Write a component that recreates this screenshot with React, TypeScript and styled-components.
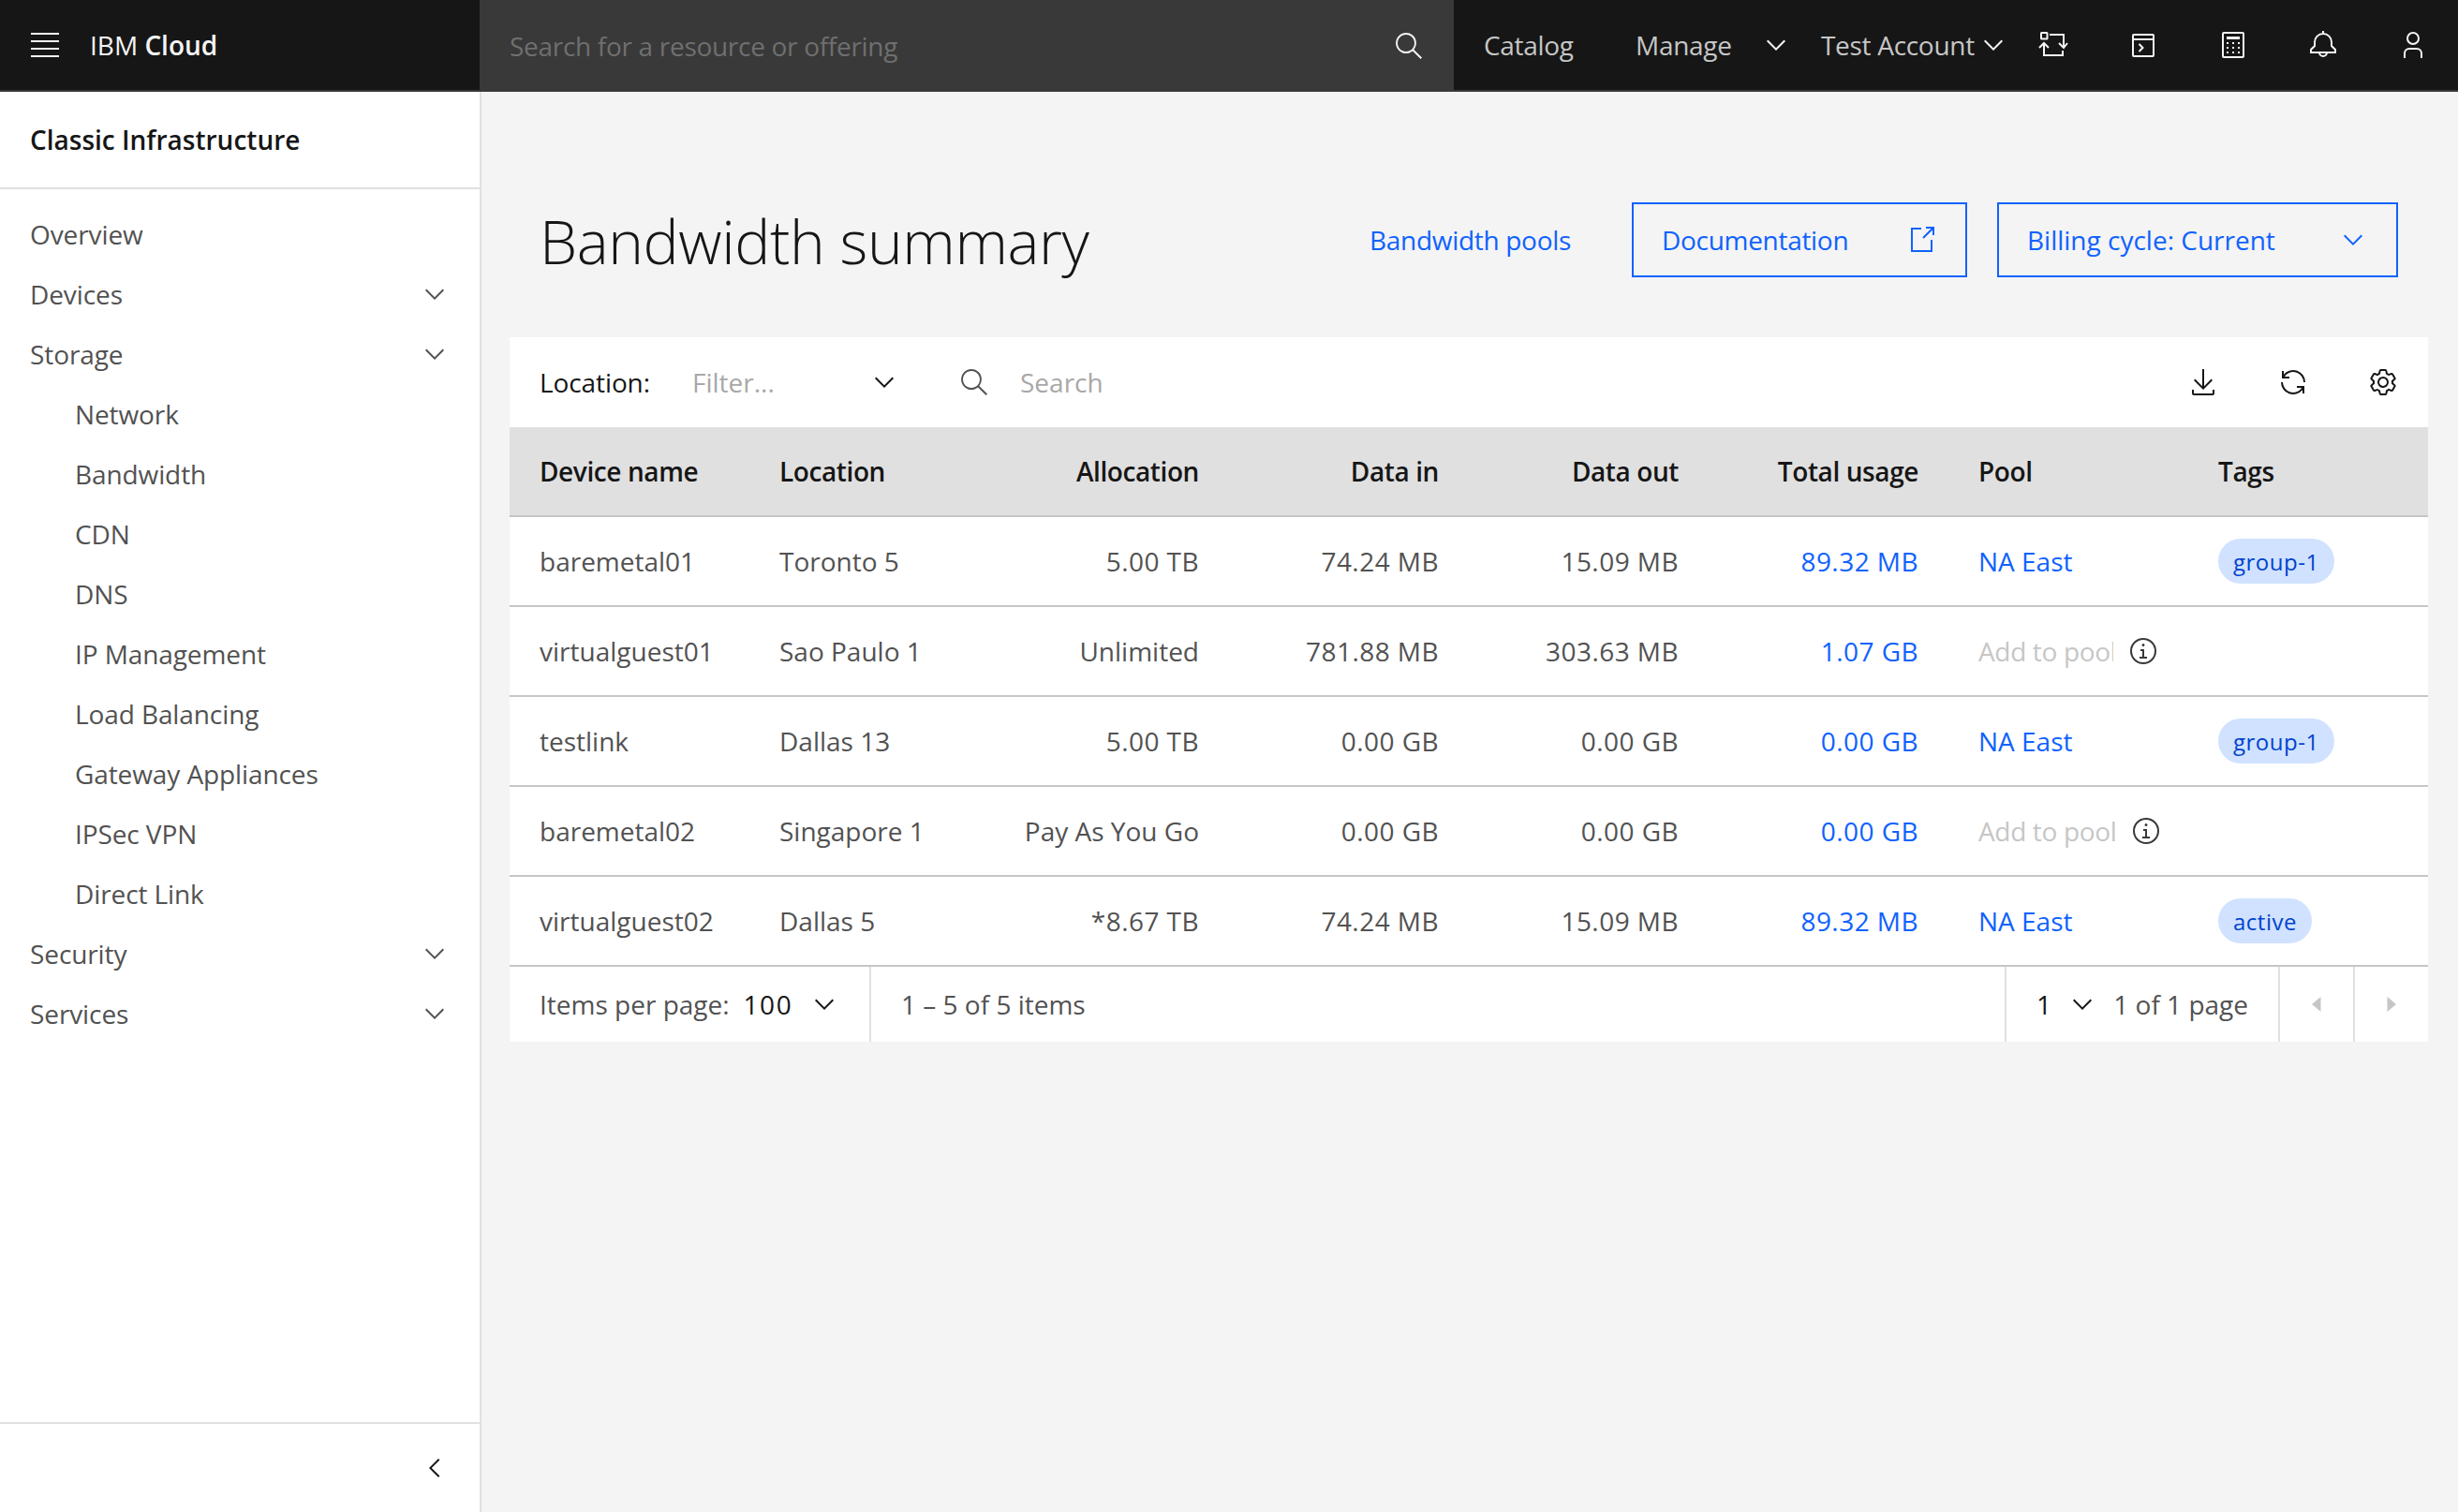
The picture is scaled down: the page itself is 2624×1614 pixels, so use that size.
import React from "react";
import styled, { createGlobalStyle } from "styled-components";

const GlobalStyle = createGlobalStyle`
  html, body {
    margin: 0;
    padding: 0;
    background: #f4f4f4;
  }
  body {
    font-family: "Open Sans", "Noto Sans", sans-serif;
    font-size: 28px;
    color: #161616;
  }
  * {
    box-sizing: border-box;
  }
`;

const NAV_ITEMS = [
  { label: "Overview" },
  { label: "Devices", expandable: true },
  { label: "Storage", expandable: true },
  { label: "Network", child: true },
  { label: "Bandwidth", child: true },
  { label: "CDN", child: true },
  { label: "DNS", child: true },
  { label: "IP Management", child: true },
  { label: "Load Balancing", child: true },
  { label: "Gateway Appliances", child: true },
  { label: "IPSec VPN", child: true },
  { label: "Direct Link", child: true },
  { label: "Security", expandable: true },
  { label: "Services", expandable: true },
];

const COLUMNS = [
  { label: "Device name" },
  { label: "Location" },
  { label: "Allocation", right: true },
  { label: "Data in", right: true },
  { label: "Data out", right: true },
  { label: "Total usage", right: true },
  { label: "Pool" },
  { label: "Tags" },
];

const ROWS = [
  { name: "baremetal01", location: "Toronto 5", allocation: "5.00 TB", dataIn: "74.24 MB", dataOut: "15.09 MB", total: "89.32 MB", pool: "NA East", tag: "group-1" },
  { name: "virtualguest01", location: "Sao Paulo 1", allocation: "Unlimited", dataIn: "781.88 MB", dataOut: "303.63 MB", total: "1.07 GB", clipPool: true },
  { name: "testlink", location: "Dallas 13", allocation: "5.00 TB", dataIn: "0.00 GB", dataOut: "0.00 GB", total: "0.00 GB", pool: "NA East", tag: "group-1" },
  { name: "baremetal02", location: "Singapore 1", allocation: "Pay As You Go", dataIn: "0.00 GB", dataOut: "0.00 GB", total: "0.00 GB" },
  { name: "virtualguest02", location: "Dallas 5", allocation: "*8.67 TB", dataIn: "74.24 MB", dataOut: "15.09 MB", total: "89.32 MB", pool: "NA East", tag: "active" },
];

const hasDigits = (value: string) => /\d/.test(value);

const Chevron = () => (
  <svg width="32" height="32" viewBox="0 0 16 16" fill="currentColor">
    <path d="M8 11L3 6l.7-.7L8 9.6l4.3-4.3.7.7z" />
  </svg>
);

const ChevronLeft = () => (
  <svg width="32" height="32" viewBox="0 0 16 16" fill="currentColor">
    <path d="M5 8l5-5 .7.7L6.4 8l4.3 4.3-.7.7z" />
  </svg>
);

const SearchIcon = () => (
  <svg width="32" height="32" viewBox="0 0 16 16" fill="currentColor">
    <path d="M15,14.3L10.7,10c1.9-2.3,1.6-5.8-0.7-7.7S4.2,0.7,2.3,3S0.7,8.8,3,10.7c2,1.7,5,1.7,7,0l4.3,4.3L15,14.3z M2,6.5 C2,4,4,2,6.5,2S11,4,11,6.5S9,11,6.5,11S2,9,2,6.5z" />
  </svg>
);

const Line = styled.svg`
  fill: none;
  stroke: currentColor;
  stroke-width: 2;
`;

const SwitcherIcon = () => (
  <Line width="32" height="32" viewBox="0 0 32 32">
    <rect x="3" y="3" width="6.5" height="6.5" rx="0.5" />
    <path d="M12 5H27V18M22 14l5 5 4-5M6 14V27H26V22M1 19l5-5 5 5" />
  </Line>
);

const TerminalIcon = () => (
  <Line width="32" height="32" viewBox="0 0 32 32">
    <rect x="5" y="5" width="22" height="23" rx="1" />
    <path d="M5 10H27M11.5 15l4 4-4 4" />
  </Line>
);

const CalculatorIcon = () => (
  <svg width="32" height="32" viewBox="0 0 32 32" fill="#f4f4f4">
    <rect x="5" y="3" width="22" height="26" rx="1" fill="none" stroke="#f4f4f4" strokeWidth="2" />
    <rect x="9" y="7" width="14" height="3" />
    {[14, 19, 24].map((y) =>
      [10, 16, 22].map((x) => <rect key={`${x}-${y}`} x={x - 1} y={y - 1} width="2" height="2" />)
    )}
  </svg>
);

const BellIcon = () => (
  <Line width="32" height="32" viewBox="0 0 32 32">
    <path d="M16 4a9 9 0 0 0-9 9v4l-4 4v3h26v-3l-4-4v-4a9 9 0 0 0-9-9zM16 1v3M12 24a4 4 0 0 0 8 0" />
  </Line>
);

const UserIcon = () => (
  <Line width="32" height="32" viewBox="0 0 32 32">
    <circle cx="16" cy="9" r="6" />
    <path d="M7 30V25a5 5 0 0 1 5-5h8a5 5 0 0 1 5 5v5" />
  </Line>
);

const ExternalIcon = () => (
  <Line width="32" height="32" viewBox="0 0 32 32">
    <path d="M15 4H5V28H26V16M17 14L27.5 3.5M20 3H28V11" />
  </Line>
);

const DownloadIcon = () => (
  <svg width="32" height="32" viewBox="0 0 32 32" fill="currentColor">
    <path d="M26 24v4H6v-4H4v4l.01-.01A2 2 0 006 30h20a2 2 0 002-2v-4zM26 14l-1.41-1.41L17 20.17V2h-2v18.17l-7.59-7.58L6 14l10 10 10-10z" />
  </svg>
);

const RenewIcon = () => (
  <svg width="32" height="32" viewBox="0 0 32 32" fill="currentColor">
    <path d="M12 10H6.78A11 11 0 0127 16h2A13 13 0 006 7.68V4H4v8h8zM20 22h5.22A11 11 0 015 16H3a13 13 0 0023 8.32V28h2v-8h-8z" />
  </svg>
);

const SettingsIcon = () => (
  <svg width="32" height="32" viewBox="0 0 32 32" fill="currentColor">
    <path d="M27 16.76V16v-.77l1.92-1.68A2 2 0 0029.3 11l-2.36-4a2 2 0 00-1.73-1 2 2 0 00-.64.1l-2.43.82a11.35 11.35 0 00-1.31-.75l-.51-2.52a2 2 0 00-2-1.61h-4.68a2 2 0 00-2 1.61l-.51 2.52a11.48 11.48 0 00-1.32.75l-2.38-.86A2 2 0 006.79 6a2 2 0 00-1.73 1L2.7 11a2 2 0 00.41 2.51L5 15.24v1.53l-1.89 1.68A2 2 0 002.7 21l2.36 4a2 2 0 001.73 1 2 2 0 00.64-.1l2.43-.82a11.35 11.35 0 001.31.75l.51 2.52a2 2 0 002 1.61h4.72a2 2 0 002-1.61l.51-2.52a11.48 11.48 0 001.32-.75l2.42.82a2 2 0 00.64.1 2 2 0 001.73-1l2.28-4a2 2 0 00-.41-2.51zM25.21 24l-3.43-1.16a8.86 8.86 0 01-2.71 1.57L18.36 28h-4.72l-.71-3.55a9.36 9.36 0 01-2.7-1.57L6.79 24l-2.36-4 2.72-2.4a8.9 8.9 0 010-3.13L4.43 12l2.36-4 3.43 1.16a8.86 8.86 0 012.71-1.57L13.64 4h4.72l.71 3.55a9.36 9.36 0 012.7 1.57L25.21 8l2.36 4-2.72 2.4a8.9 8.9 0 010 3.13L27.57 20z" />
    <path d="M16 22a6 6 0 116-6 5.94 5.94 0 01-6 6zm0-10a3.91 3.91 0 00-4 4 3.91 3.91 0 004 4 3.91 3.91 0 004-4 3.91 3.91 0 00-4-4z" />
  </svg>
);

const InfoIcon = () => (
  <svg width="32" height="32" viewBox="0 0 32 32" fill="currentColor">
    <path d="M17 22v-8h-4v2h2v6h-3v2h8v-2h-3zM16 8a1.5 1.5 0 101.5 1.5A1.5 1.5 0 0016 8z" />
    <path d="M16 30a14 14 0 1114-14 14 14 0 01-14 14zm0-26a12 12 0 1012 12A12 12 0 0016 4z" />
  </svg>
);

const Page = styled.div`
  height: 1614px;
  display: flex;
  flex-direction: column;
  overflow: hidden;
`;

const Header = styled.header`
  flex: none;
  height: 98px;
  display: flex;
  background: #161616;
  border-bottom: 2px solid #393939;
  color: #f4f4f4;
`;

const Brand = styled.div`
  width: 512px;
  display: flex;
  align-items: center;
  padding-left: 33px;
`;

const Burger = styled.div`
  width: 30px;
  height: 26px;
  margin-right: 33px;
  background: repeating-linear-gradient(to bottom, #f4f4f4 0 2px, transparent 2px 8px);
`;

const BrandName = styled.span`
  font-size: 28px;
  color: #f4f4f4;

  b {
    font-weight: 600;
  }
`;

const SearchBar = styled.div`
  width: 1040px;
  height: 98px;
  background: #393939;
  display: flex;
  align-items: center;
  justify-content: space-between;
  padding: 0 32px;
  color: #f4f4f4;
`;

const SearchHint = styled.span`
  color: #6f6f6f;
  letter-spacing: -0.3px;
`;

const NavItem = styled.div<{ $width: number }>`
  width: ${(p) => p.$width}px;
  padding-left: 32px;
  display: flex;
  align-items: center;
  color: #c6c6c6;
  white-space: nowrap;
  letter-spacing: -0.3px;
`;

const NavChevron = styled.span`
  display: flex;
  margin-left: auto;
  color: #f4f4f4;
`;

const IconCell = styled.div`
  width: 96px;
  display: flex;
  align-items: center;
  justify-content: center;
`;

const Body = styled.div`
  flex: 1;
  display: flex;
  min-height: 0;
`;

const Sidebar = styled.aside`
  width: 514px;
  flex: none;
  background: #fff;
  border-right: 2px solid #e0e0e0;
  display: flex;
  flex-direction: column;
`;

const SideTitle = styled.div`
  height: 104px;
  padding-left: 32px;
  display: flex;
  align-items: center;
  font-weight: 600;
  border-bottom: 2px solid #e0e0e0;
  flex: none;
`;

const SideList = styled.nav`
  flex: 1;
  padding-top: 16px;
`;

const SideRow = styled.div<{ $child?: boolean }>`
  height: 64px;
  display: flex;
  align-items: center;
  justify-content: space-between;
  padding: 0 32px 0 ${(p) => (p.$child ? 80 : 32)}px;
  color: #525252;
  letter-spacing: -0.1px;
`;

const SideFooter = styled.div`
  height: 96px;
  flex: none;
  border-top: 2px solid #e0e0e0;
  display: flex;
  align-items: center;
  justify-content: flex-end;
  padding-right: 32px;
`;

const Main = styled.main`
  flex: 1;
  padding: 118px 32px 0 30px;
  background: #f4f4f4;
`;

const TitleRow = styled.div`
  height: 80px;
  padding: 0 32px;
  margin-bottom: 64px;
  display: flex;
  align-items: center;
`;

const Title = styled.h1`
  margin: 3px auto 0 0;
  font-size: 64px;
  font-weight: 300;
  line-height: 84px;
  letter-spacing: -0.4px;
  color: #161616;
`;

const TextLink = styled.span`
  width: 280px;
  color: #0f62fe;
  white-space: nowrap;
  letter-spacing: -0.3px;
`;

const OutlineButton = styled.div`
  height: 80px;
  border: 2px solid #0f62fe;
  color: #0f62fe;
  padding: 0 30px 0 30px;
  display: flex;
  align-items: center;
  justify-content: space-between;
  white-space: nowrap;
  letter-spacing: -0.3px;
`;

const DocButton = styled(OutlineButton)`
  width: 358px;
`;

const BillingButton = styled(OutlineButton)`
  width: 428px;
  margin-left: 32px;
  letter-spacing: 0;
`;

const Panel = styled.section`
  width: 2048px;
  background: #fff;
`;

const Toolbar = styled.div`
  height: 96px;
  display: flex;
  align-items: center;
  padding-left: 32px;
`;

const FilterLabel = styled.span`
  width: 163px;
  color: #161616;
  letter-spacing: -0.1px;
`;

const FilterSelect = styled.div`
  width: 221px;
  display: flex;
  align-items: center;
  justify-content: space-between;
  color: #a8a8a8;

  svg {
    color: #161616;
  }
`;

const ToolSearch = styled.div`
  display: flex;
  align-items: center;
  gap: 33px;
  margin-left: 64px;
  color: #a8a8a8;

  svg {
    color: #525252;
  }
`;

const ToolIcons = styled.div`
  margin-left: auto;
  display: flex;
  color: #161616;
`;

const Row = styled.div<{ $head?: boolean }>`
  height: 96px;
  display: grid;
  grid-template-columns: repeat(8, 256px);
  align-items: center;
  border-bottom: 2px solid #c6c6c6;
  background: ${(p) => (p.$head ? "#e0e0e0" : "#fff")};
  color: ${(p) => (p.$head ? "#161616" : "#525252")};
  font-weight: ${(p) => (p.$head ? 600 : 400)};
  letter-spacing: ${(p) => (p.$head ? "-0.4px" : "0")};
`;

const Cell = styled.div<{ $right?: boolean; $link?: boolean; $digits?: boolean }>`
  padding: 0 32px;
  text-align: ${(p) => (p.$right ? "right" : "left")};
  color: ${(p) => (p.$link ? "#0f62fe" : "inherit")};
  letter-spacing: ${(p) => (p.$digits ? "0.45px" : "inherit")};
  white-space: nowrap;
`;

const AddToPool = styled.div`
  padding-left: 32px;
  display: flex;
  align-items: center;
  gap: 16px;
  color: #393939;
  white-space: nowrap;
`;

const PoolHint = styled.span<{ $clip?: boolean }>`
  color: #c6c6c6;
  letter-spacing: -0.35px;
  ${(p) => (p.$clip ? "width: 144px; overflow: hidden;" : "")}
`;

const Tag = styled.span`
  display: inline-flex;
  align-items: center;
  height: 48px;
  padding: 0 16px;
  border-radius: 24px;
  background: #d0e2ff;
  color: #0043ce;
  font-size: 24px;
  letter-spacing: 0.5px;
`;

const Pager = styled.div`
  height: 80px;
  display: flex;
  align-items: stretch;
  color: #525252;
`;

const PagerPart = styled.div<{ $width?: number; $grow?: boolean }>`
  display: flex;
  align-items: center;
  padding: 0 32px;
  border-right: 2px solid #e0e0e0;
  ${(p) => (p.$width ? `width: ${p.$width}px;` : "")}
  ${(p) => (p.$grow ? "flex: 1;" : "")}
  white-space: nowrap;
`;

const PerPageValue = styled.span`
  color: #161616;
  margin-left: 15px;
  letter-spacing: 1.5px;
`;

const PageValue = styled.span`
  color: #161616;
`;

const PagerChevron = styled.span<{ $gap: number }>`
  display: flex;
  color: #161616;
  margin: 0 ${(p) => p.$gap}px 0 auto;
`;

const CaretButton = styled.div<{ $width: number; $divided?: boolean }>`
  width: ${(p) => p.$width}px;
  display: flex;
  align-items: center;
  justify-content: center;
  color: #c6c6c6;
  ${(p) => (p.$divided ? "border-left: 2px solid #e0e0e0;" : "")}
`;

export default function App() {
  return (
    <Page>
      <GlobalStyle />
      <Header>
        <Brand>
          <Burger />
          <BrandName>
            IBM <b>Cloud</b>
          </BrandName>
        </Brand>
        <SearchBar>
          <SearchHint>Search for a resource or offering</SearchHint>
          <SearchIcon />
        </SearchBar>
        <NavItem $width={162}>Catalog</NavItem>
        <NavItem $width={198}>
          Manage
          <NavChevron>
            <Chevron />
          </NavChevron>
        </NavItem>
        <NavItem $width={232}>
          Test Account
          <NavChevron>
            <Chevron />
          </NavChevron>
        </NavItem>
        <IconCell>
          <SwitcherIcon />
        </IconCell>
        <IconCell>
          <TerminalIcon />
        </IconCell>
        <IconCell>
          <CalculatorIcon />
        </IconCell>
        <IconCell>
          <BellIcon />
        </IconCell>
        <IconCell>
          <UserIcon />
        </IconCell>
      </Header>
      <Body>
        <Sidebar>
          <SideTitle>Classic Infrastructure</SideTitle>
          <SideList>
            {NAV_ITEMS.map((item) => (
              <SideRow key={item.label} $child={item.child}>
                {item.label}
                {item.expandable && <Chevron />}
              </SideRow>
            ))}
          </SideList>
          <SideFooter>
            <ChevronLeft />
          </SideFooter>
        </Sidebar>
        <Main>
          <TitleRow>
            <Title>Bandwidth summary</Title>
            <TextLink>Bandwidth pools</TextLink>
            <DocButton>
              Documentation
              <ExternalIcon />
            </DocButton>
            <BillingButton>
              Billing cycle: Current
              <Chevron />
            </BillingButton>
          </TitleRow>
          <Panel>
            <Toolbar>
              <FilterLabel>Location:</FilterLabel>
              <FilterSelect>
                Filter...
                <Chevron />
              </FilterSelect>
              <ToolSearch>
                <SearchIcon />
                Search
              </ToolSearch>
              <ToolIcons>
                <IconCell>
                  <DownloadIcon />
                </IconCell>
                <IconCell>
                  <RenewIcon />
                </IconCell>
                <IconCell>
                  <SettingsIcon />
                </IconCell>
              </ToolIcons>
            </Toolbar>
            <Row $head>
              {COLUMNS.map((c) => (
                <Cell key={c.label} $right={c.right}>
                  {c.label}
                </Cell>
              ))}
            </Row>
            {ROWS.map((r) => (
              <Row key={r.name}>
                <Cell>{r.name}</Cell>
                <Cell>{r.location}</Cell>
                <Cell $right $digits={hasDigits(r.allocation)}>
                  {r.allocation}
                </Cell>
                <Cell $right $digits>
                  {r.dataIn}
                </Cell>
                <Cell $right $digits>
                  {r.dataOut}
                </Cell>
                <Cell $right $link $digits>
                  {r.total}
                </Cell>
                {r.pool ? (
                  <Cell $link>{r.pool}</Cell>
                ) : (
                  <AddToPool>
                    <PoolHint $clip={r.clipPool}>Add to pool</PoolHint>
                    <InfoIcon />
                  </AddToPool>
                )}
                <Cell>{r.tag && <Tag>{r.tag}</Tag>}</Cell>
              </Row>
            ))}
            <Pager>
              <PagerPart $width={386}>
                Items per page:
                <PerPageValue>100</PerPageValue>
                <PagerChevron $gap={0}>
                  <Chevron />
                </PagerChevron>
              </PagerPart>
              <PagerPart $grow>1 – 5 of 5 items</PagerPart>
              <PagerPart $width={292}>
                <PageValue>1</PageValue>
                <PagerChevron $gap={17}>
                  <Chevron />
                </PagerChevron>
                1 of 1 page
              </PagerPart>
              <CaretButton $width={78}>
                <svg width="10" height="16" viewBox="0 0 10 16" fill="currentColor">
                  <path d="M9.5 0v16L0 8z" />
                </svg>
              </CaretButton>
              <CaretButton $width={80} $divided>
                <svg width="10" height="16" viewBox="0 0 10 16" fill="currentColor">
                  <path d="M.5 0v16L10 8z" />
                </svg>
              </CaretButton>
            </Pager>
          </Panel>
        </Main>
      </Body>
    </Page>
  );
}
